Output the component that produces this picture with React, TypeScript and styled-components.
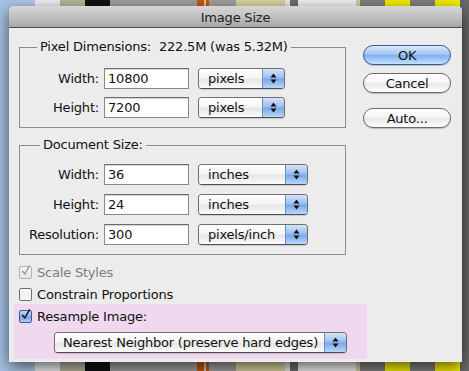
import React from "react";
import styled, { createGlobalStyle } from "styled-components";

const GlobalStyle = createGlobalStyle`
  html, body {
    margin: 0;
    padding: 0;
    width: 469px;
    height: 371px;
    overflow: hidden;
  }
  body {
    font-family: "Lucida Grande", "DejaVu Sans", sans-serif;
    font-size: 13px;
    letter-spacing: -0.2px;
    color: #111;
  }
`;

const Desktop = styled.div`
  width: 469px;
  height: 371px;
  padding: 6px 7px 0 9px;
  box-sizing: border-box;
  background: linear-gradient(
    to right,
    #a6c2e6 0px, #b4cde9 35px,
    #f2f2f2 35px, #f2f2f2 60px,
    #b9b99e 60px, #b9b99e 85px,
    #121212 85px, #121212 110px,
    #a2a2a2 110px, #a2a2a2 197px,
    #c65a0c 197px, #c65a0c 204px,
    #d6c9b8 204px, #d6c9b8 206px,
    #c65a0c 206px, #c65a0c 209px,
    #a2a2a2 209px, #a2a2a2 236px,
    #dcd4a2 236px, #dcd4a2 285px,
    #ecece4 285px, #ecece4 290px,
    #6e6e6e 290px, #6e6e6e 298px,
    #f2f2f2 298px, #f2f2f2 356px,
    #d8cf9c 356px, #d8cf9c 360px,
    #818181 360px, #818181 385px,
    #f6f000 385px, #f6f000 410px,
    #818181 410px, #818181 435px,
    #f6f000 435px, #f6f000 460px,
    #6a6a6a 460px
  );
`;

const Dialog = styled.div`
  width: 453px;
  height: 356px;
  display: flex;
  flex-direction: column;
  border-radius: 5px 5px 0 0;
  background: #ececec;
  box-shadow: 0 5px 16px rgba(0, 0, 0, 0.65);
  overflow: hidden;
`;

const TitleBar = styled.div`
  height: 20px;
  flex: none;
  display: flex;
  align-items: center;
  justify-content: center;
  background: linear-gradient(to bottom, #d6d6d6 0%, #c2c2c2 50%, #a6a6a6 100%);
  border-bottom: 1px solid #4c4c4c;
  color: #222;
  font-size: 13px;
  padding-top: 1px;
`;

const Body = styled.div`
  flex: 1;
  padding: 0 11px 0 10px;
  display: flex;
  flex-direction: column;
`;

const TopArea = styled.div`
  display: flex;
  gap: 17px;
`;

const Groups = styled.div`
  width: 328px;
  display: flex;
  flex-direction: column;
`;

const Group = styled.div<{ $top: number }>`
  margin-top: ${(p) => p.$top}px;
  border: 1px solid #8e8e8e;
  padding: 0 0 9px 0;
`;

const Legend = styled.div<{ $indent: number }>`
  margin: -9px 0 0 ${(p) => p.$indent}px;
  padding: 0 3px;
  height: 16px;
  line-height: 16px;
  width: fit-content;
  background: #ececec;
  white-space: pre;
`;

const Rows = styled.div<{ $lead: number; $gap: number }>`
  margin-top: ${(p) => p.$lead}px;
  display: flex;
  flex-direction: column;
  gap: ${(p) => p.$gap}px;
`;

const Row = styled.div`
  display: grid;
  grid-template-columns: 84px 85px auto;
  align-items: center;
  height: 21px;
`;

const Label = styled.span`
  text-align: right;
  padding-right: 5px;
`;

const Field = styled.div`
  height: 21px;
  box-sizing: border-box;
  border: 1px solid #8a8a8a;
  border-top-color: #6c6c6c;
  background: #fff;
  box-shadow: inset 0 1px 1px rgba(0, 0, 0, 0.18);
  padding: 0 3px;
  line-height: 19px;
`;

const PopupBox = styled.div<{ $width: number; $inset: number }>`
  width: ${(p) => p.$width}px;
  height: 21px;
  box-sizing: border-box;
  margin-left: ${(p) => p.$inset}px;
  display: flex;
  border: 1px solid #707070;
  border-bottom-color: #505050;
  border-radius: 4px;
  overflow: hidden;
  box-shadow: 0 1px 1px rgba(0, 0, 0, 0.15);
`;

const PopupLabel = styled.div<{ $pad: number }>`
  flex: 1;
  padding-left: ${(p) => p.$pad}px;
  line-height: 19px;
  background: linear-gradient(to bottom, #ffffff 0%, #f4f4f4 45%, #e6e6e6 55%, #fbfbfb 100%);
  white-space: nowrap;
  overflow: hidden;
`;

const PopupArrows = styled.div`
  width: 21px;
  flex: none;
  display: flex;
  align-items: center;
  justify-content: center;
  border-left: 1px solid #6a8fc8;
  background: linear-gradient(to bottom, #d4e4fa 0%, #98bdf0 48%, #79a6e8 52%, #b8d8fb 100%);
`;

const Buttons = styled.div`
  width: 88px;
  padding-top: 17px;
  display: flex;
  flex-direction: column;
  gap: 8px;
`;

const Button = styled.div<{ $primary?: boolean; $space?: number }>`
  height: 20px;
  box-sizing: border-box;
  margin-top: ${(p) => p.$space ?? 0}px;
  border-radius: 10px;
  display: flex;
  align-items: center;
  justify-content: center;
  border: 1px solid ${(p) => (p.$primary ? "#3a5a94" : "#6a6a6a")};
  background: ${(p) =>
    p.$primary
      ? "linear-gradient(to bottom, #d8e8fb 0%, #9ec4f2 48%, #7fb0ee 52%, #c4e2fd 100%)"
      : "linear-gradient(to bottom, #ffffff 0%, #f6f6f6 45%, #e8e8e8 55%, #ffffff 100%)"};
  box-shadow: 0 1px 1px rgba(0, 0, 0, 0.2);
  color: #111;
`;

const Options = styled.div`
  margin-top: 7px;
  display: flex;
  flex-direction: column;
  gap: 2px;
`;

const CheckRow = styled.div<{ $muted?: boolean }>`
  height: 20px;
  display: flex;
  align-items: center;
  gap: 5px;
  color: ${(p) => (p.$muted ? "#7e7e7e" : "#111")};
`;

const Box = styled.div<{ $kind: "off" | "on" | "disabled" }>`
  width: 13px;
  height: 13px;
  box-sizing: border-box;
  border-radius: 2px;
  flex: none;
  display: flex;
  align-items: center;
  justify-content: center;
  overflow: visible;
  border: 1px solid
    ${(p) => (p.$kind === "on" ? "#3d5b99" : p.$kind === "disabled" ? "#b0b0b0" : "#6e6e6e")};
  background: ${(p) =>
    p.$kind === "on"
      ? "linear-gradient(to bottom, #c6d8f6 0%, #8aaeea 50%, #7aa2e4 55%, #b0cff7 100%)"
      : p.$kind === "disabled"
      ? "linear-gradient(to bottom, #f6f6f6, #e6e6e6)"
      : "linear-gradient(to bottom, #ffffff 0%, #efefef 55%, #fafafa 100%)"};
`;

const Highlight = styled.div`
  margin: -2px 0 0 -5px;
  width: 353px;
  box-sizing: border-box;
  padding: 2px 0 6px 5px;
  background: #f0d8ee;
  display: flex;
  flex-direction: column;
  gap: 6px;
`;

const MethodRow = styled.div`
  padding-left: 35px;
`;

const Arrows = () => (
  <svg width="7" height="11" viewBox="0 0 7 11">
    <path d="M3.5 0.5 L6.5 4.5 L0.5 4.5 Z" fill="#111" />
    <path d="M3.5 10.5 L6.5 6.5 L0.5 6.5 Z" fill="#111" />
  </svg>
);

const Check = ({ color }: { color: string }) => (
  <svg width="13" height="15" viewBox="0 0 13 15" style={{ marginTop: -4, marginLeft: 1 }}>
    <path
      d="M2 8.5 L5 12 L11 1.5"
      stroke={color}
      strokeWidth="1.8"
      fill="none"
      strokeLinecap="round"
      strokeLinejoin="round"
    />
  </svg>
);

const Popup = ({
  label,
  width,
  pad = 9,
  inset = 9,
}: {
  label: string;
  width: number;
  pad?: number;
  inset?: number;
}) => (
  <PopupBox $width={width} $inset={inset}>
    <PopupLabel $pad={pad}>{label}</PopupLabel>
    <PopupArrows>
      <Arrows />
    </PopupArrows>
  </PopupBox>
);

const FieldRow = ({ label, value, unit, popWidth }: { label: string; value: string; unit: string; popWidth: number }) => (
  <Row>
    <Label>{label}</Label>
    <Field>{value}</Field>
    <Popup label={unit} width={popWidth} />
  </Row>
);

export default function App() {
  return (
    <>
      <GlobalStyle />
      <Desktop>
        <Dialog>
          <TitleBar>Image Size</TitleBar>
          <Body>
            <TopArea>
              <Groups>
                <Group $top={19}>
                  <Legend $indent={17}>{"Pixel Dimensions:  222.5M (was 5.32M)"}</Legend>
                  <Rows $lead={13} $gap={8}>
                    <FieldRow label="Width:" value="10800" unit="pixels" popWidth={87} />
                    <FieldRow label="Height:" value="7200" unit="pixels" popWidth={87} />
                  </Rows>
                </Group>
                <Group $top={17}>
                  <Legend $indent={20}>Document Size:</Legend>
                  <Rows $lead={11} $gap={9}>
                    <FieldRow label="Width:" value="36" unit="inches" popWidth={110} />
                    <FieldRow label="Height:" value="24" unit="inches" popWidth={110} />
                    <FieldRow label="Resolution:" value="300" unit="pixels/inch" popWidth={110} />
                  </Rows>
                </Group>
              </Groups>
              <Buttons>
                <Button $primary>OK</Button>
                <Button>Cancel</Button>
                <Button $space={7}>Auto...</Button>
              </Buttons>
            </TopArea>
            <Options>
              <CheckRow $muted>
                <Box $kind="disabled">
                  <Check color="#9a9a9a" />
                </Box>
                Scale Styles
              </CheckRow>
              <CheckRow>
                <Box $kind="off" />
                Constrain Proportions
              </CheckRow>
              <Highlight>
                <CheckRow>
                  <Box $kind="on">
                    <Check color="#111" />
                  </Box>
                  Resample Image:
                </CheckRow>
                <MethodRow>
                  <Popup label="Nearest Neighbor (preserve hard edges)" width={293} pad={8} inset={0} />
                </MethodRow>
              </Highlight>
            </Options>
          </Body>
        </Dialog>
      </Desktop>
    </>
  );
}
